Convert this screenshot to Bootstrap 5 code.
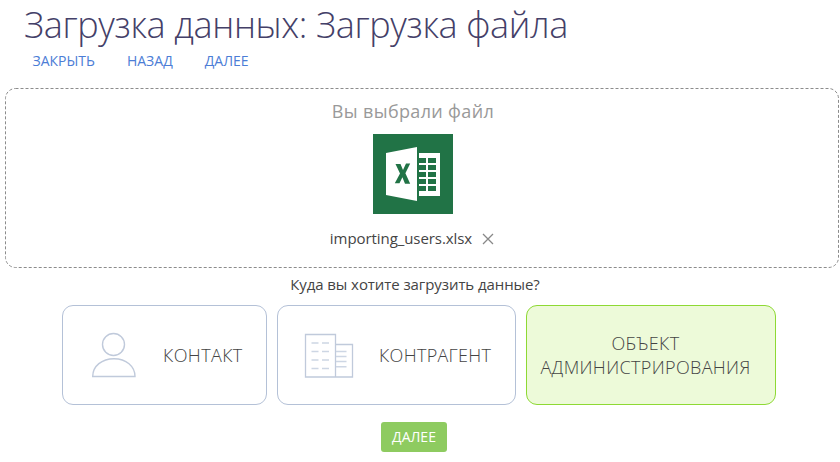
<!DOCTYPE html>
<html lang="ru">
<head>
<meta charset="utf-8">
<meta name="viewport" content="width=device-width, initial-scale=1">
<title>Загрузка данных</title>
<link href="https://cdn.jsdelivr.net/npm/bootstrap@5.3.0/dist/css/bootstrap.min.css" rel="stylesheet">
<style>
body { font-family: "Open Sans", "Noto Sans", sans-serif; font-size: 14px; color: #444; background: #fff; overflow: hidden; }
.page-title { height: 50px; padding-left: 24px; font-size: 36px; line-height: 50px; font-weight: 300; letter-spacing: -.36px; color: #444068; white-space: nowrap; }
.actions { height: 38px; padding-left: 32.500px; gap: 32px; }
.actions a { font-size: 14px; line-height: 22px; color: #4c7dd6; text-decoration: none; }
.drop-zone { width: 834px; height: 180px; margin-left: 5px; }
.zone-frame { inset: 0; width: 834px; height: 180px; }
.zone-caption { font-size: 18px; line-height: 26px; letter-spacing: .35px; color: #999; padding-top: 10px; padding-right: 18px; }
.file-icon { width: 80px; height: 80px; margin: 10px 18px 0 0; }
.file-name { font-size: 15px; line-height: 22px; letter-spacing: -.07px; margin-top: 13px; gap: 10px; padding-right: 20px; }
.question { height: 37px; font-size: 15px; line-height: 32px; letter-spacing: -.08px; padding-right: 10px; }
.targets { margin-left: 62px; gap: 10px; }
.target { height: 100px; border: 1px solid #b4c1d7; border-radius: 11px; background: #fff; color: #444; font-size: 18px; line-height: 24px; font-weight: 300; padding: 0; letter-spacing: .38px; }
.target.selected { border-color: #8ed934; background: #edfad9; }
.t-contact { width: 205px; }
.t-account { width: 239px; letter-spacing: .3px; }
.t-admin { width: 250px; padding-right: 11px; letter-spacing: .35px; }
.t-contact svg { margin-left: 29px; margin-right: 27px; }
.t-account svg { margin-left: 26px; margin-right: 25px; }
.btn-next { width: 66px; height: 30px; margin: 17px 0 0 381px; padding: 0; border: 0; border-radius: 3px; background: #8ecb60; color: #fff; font-size: 14px; line-height: 30px; }
</style>
<script src="https://cdn.jsdelivr.net/npm/bootstrap@5.3.0/dist/js/bootstrap.bundle.min.js"></script>
</head>
<body>
<h1 class="page-title m-0"><span>Загрузка данных: Загрузка файла</span></h1>
<nav class="actions d-flex align-items-start">
  <a href="#">ЗАКРЫТЬ</a><a href="#">НАЗАД</a><a href="#">ДАЛЕЕ</a>
</nav>
<section class="drop-zone position-relative d-flex flex-column align-items-center">
  <svg class="zone-frame position-absolute" viewBox="0 0 834 180" fill="none" stroke="#8c8c8c" stroke-dasharray="3 2"><rect x=".5" y=".5" width="833" height="179" rx="10"/></svg>
  <div class="zone-caption">Вы выбрали файл</div>
  <svg class="file-icon" viewBox="0 0 80 80">
    <path fill="#217346" d="M0 0h80v80H0z"/>
    <path fill="#fff" d="M13 19 44 13v54l-31-6zM46 19h21v43H46z"/>
    <path fill="#217346" d="M46 24h7v5h-7zm9 0h8v5h-8zM46 31h7v5h-7zm9 0h8v5h-8zM46 38h7v5h-7zm9 0h8v5h-8zM46 45h7v5h-7zm9 0h8v5h-8zM46 52h7v5h-7zm9 0h8v5h-8z"/>
    <path fill="#217346" d="M22.500 30h5l2.500 6 3-6.500h4.200L32.400 39.300l4.800 10.400H32l-2.600-6.500-2.900 6H21.800l5.200-9.700z"/>
  </svg>
  <div class="file-name d-flex align-items-center"><span>importing_users.xlsx</span>
    <svg class="mt-1" width="12" height="14" viewBox="0 0 12 14" fill="none" stroke="#888" stroke-width="1.3"><path d="M1 1l10 10M11 1 1 11"/></svg>
  </div>
</section>
<div class="question text-center">Куда вы хотите загрузить данные?</div>
<div class="targets d-flex">
  <button class="target t-contact d-flex align-items-center">
    <svg width="44" height="46" viewBox="0 0 44 46" fill="none" stroke="#c0cadb" stroke-width="1.4"><circle cx="21.500" cy="12.500" r="11"/><path d="M.7 44.500C.7 34 10 26.700 22 26.700S43 34 43 44.500z"/></svg>
    <span>КОНТАКТ</span>
  </button>
  <button class="target t-account d-flex align-items-center">
    <svg width="50" height="46" viewBox="0 0 50 46" fill="none" stroke="#c0cadb" stroke-width="1.300"><path d="M1.500 2.500h30v42.500h-30zM31.500 12.500h17V45h-17"/><path stroke="#cdd6e4" stroke-width="1.500" d="M7.500 11h7m3.500 0h7M7.500 19.500h7m3.500 0h7M7.500 28h7m3.500 0h7M7.500 36.500h7m3.500 0h7M32 19.500h10.500M32 24.500h10.500M32 29.500h10.500M32 34.800h10.500"/></svg>
    <span>КОНТРАГЕНТ</span>
  </button>
  <button class="target t-admin selected d-flex align-items-center justify-content-center"><span>ОБЪЕКТ<br>АДМИНИСТРИРОВАНИЯ</span></button>
</div>
<button class="btn btn-next d-block">ДАЛЕЕ</button>
</body>
</html>
